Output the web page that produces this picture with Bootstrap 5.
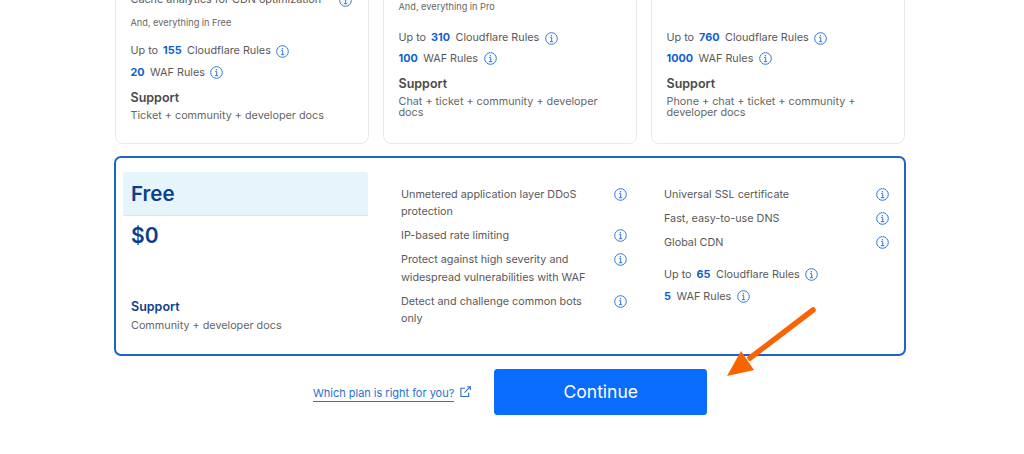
<!DOCTYPE html>
<html lang="en">
<head>
<meta charset="utf-8">
<title>Plans</title>
<link href="https://cdn.jsdelivr.net/npm/bootstrap@5.3.0/dist/css/bootstrap.min.css" rel="stylesheet">
<style>
html,body{height:454px;overflow:hidden;background:#fff}
body{font-family:Inter,"Liberation Sans",sans-serif;color:#595959;position:relative}
.plan-wrap{width:792px;margin-left:114px}
.plan-clip{height:144px;overflow:hidden}
.plan-top{display:grid;grid-template-columns:repeat(3,254px);column-gap:14px;margin-top:-56px;padding-left:1px}
.plan-tile{height:200px;border:1px solid #e9e9e9;border-radius:8px;background:#fff;padding:0 14.5px;position:relative}
.t-line{font-size:10.8px;line-height:16px;white-space:nowrap;display:flex;align-items:center}
.t-cache{margin-top:47px;width:221px}
.t-small{font-size:9.2px;line-height:14px;color:#666}
.t-free{margin-top:8px}
.t-pro{margin-top:55px}
.t-spacer{height:85px}
.t-rule{font-size:10.8px;line-height:16px;display:flex;align-items:center;white-space:nowrap}
.t-rule b{color:#0e5fd0;font-weight:700;margin:0 5.5px 0 5px}
.t-rule b:first-child{margin-left:0}
.r-first{margin-top:13px}
.r-next{margin-top:5.5px}
.t-pro + .r-first{margin-top:16px}
.t-pro ~ .r-next,.t-spacer ~ .r-next{margin-top:4.5px}
.t-head{font-size:12.5px;font-weight:600;line-height:16px;color:#4a4a4a;margin-top:9px}
.t-sub{margin-top:2px;color:#666}
.t-text{font-size:10.8px;line-height:11px;color:#666;margin-top:4.5px;padding-right:10px}
.ii{width:13px;height:13px;flex:none;color:#2f78d8;display:block}
.t-rule .ii{margin-left:5.5px}
.free-box{height:200px;margin-top:12px;border:2px solid #1e64c8;border-radius:7px;display:grid;grid-template-columns:245px 246px 1fr;padding:14px 16px 0 7px;width:792px}
.free-title{height:44px;background:#e6f4fb;border-bottom:1px solid #d8e8f2;border-radius:3px 3px 0 0;font-size:20.5px;font-weight:600;color:#0b3f8a;padding:5px 8px 0;line-height:34px}
.free-price{font-size:21px;font-weight:600;color:#0b3f8a;line-height:30px;padding:5px 8px 0}
.free-sup{font-size:12.5px;font-weight:600;color:#12408c;line-height:16px;margin-top:48px;padding-left:8px}
.free-doc{font-size:10.8px;line-height:16px;color:#666;padding-left:8px;margin-top:3px}
.feat-a{padding:13.5px 0 0 33px}
.feat-b{padding:14px 0 0 50px}
.feat-row{display:flex;justify-content:space-between;font-size:10.8px;line-height:17.5px;color:#595959;margin-bottom:6.5px}
.feat-row .ii{margin-top:2px}
.feat-a .feat-row{width:226px}
.feat-b .feat-row{width:225px}
.feat-b .t-rule.r-first{margin-top:15px}
.feat-b .t-rule.r-next{margin-top:6px}
.act-row{display:flex;align-items:flex-start;margin-top:13px}
.plan-link{font-size:11px;color:#2b6fd0;text-decoration:none;border-bottom:1px solid #2b6fd0;line-height:15px;margin:17px 0 0 199px;white-space:nowrap;letter-spacing:-.02px}
.ext{width:11px;height:11px;color:#2b6fd0;margin:17px 0 0 5.5px;flex:none}
.go-btn{--bs-btn-bg:#0a6cff;--bs-btn-border-color:#0a6cff;--bs-btn-color:#fff;--bs-btn-hover-bg:#0a6cff;--bs-btn-border-radius:3px;width:213px;height:46px;margin-left:23.5px;font-size:17.5px;font-weight:400;padding:0}
.arrow-mark{position:absolute;left:720px;top:300px;width:105px;height:85px;pointer-events:none}
</style>
</head>
<body>
<svg width="0" height="0" class="position-absolute"><defs>
<symbol id="inf" viewBox="0 0 13 13"><circle cx="6.5" cy="6.5" r="5.8" fill="none" stroke="currentColor" stroke-width="1"/><path d="M5.2 5.6h1.5v4M4.9 9.7h3.3" fill="none" stroke="currentColor" stroke-width="1"/><circle cx="6.4" cy="3.7" r=".8" fill="currentColor"/></symbol>
</defs></svg>
<main class="plan-wrap">
  <div class="plan-clip">
  <section class="plan-top">
    <article class="plan-tile">
      <div class="d-flex justify-content-between t-line t-cache"><span>Cache analytics for CDN optimization</span><svg class="ii"><use href="#inf"/></svg></div>
      <div class="t-small t-free">And, everything in Free</div>
      <div class="t-rule r-first"><span>Up to</span><b>155</b><span>Cloudflare Rules</span><svg class="ii"><use href="#inf"/></svg></div>
      <div class="t-rule r-next"><b>20</b><span>WAF Rules</span><svg class="ii"><use href="#inf"/></svg></div>
      <div class="t-head">Support</div>
      <div class="t-line t-sub">Ticket + community + developer docs</div>
    </article>
    <article class="plan-tile">
      <div class="t-small t-pro">And, everything in Pro</div>
      <div class="t-rule r-first"><span>Up to</span><b>310</b><span>Cloudflare Rules</span><svg class="ii"><use href="#inf"/></svg></div>
      <div class="t-rule r-next"><b>100</b><span>WAF Rules</span><svg class="ii"><use href="#inf"/></svg></div>
      <div class="t-head">Support</div>
      <div class="t-text">Chat + ticket + community + developer docs</div>
    </article>
    <article class="plan-tile">
      <div class="t-spacer"></div>
      <div class="t-rule"><span>Up to</span><b>760</b><span>Cloudflare Rules</span><svg class="ii"><use href="#inf"/></svg></div>
      <div class="t-rule r-next"><b>1000</b><span>WAF Rules</span><svg class="ii"><use href="#inf"/></svg></div>
      <div class="t-head">Support</div>
      <div class="t-text">Phone + chat + ticket + community + developer docs</div>
    </article>
  </section>
  </div>
  <section class="free-box">
    <div>
      <div class="free-title">Free</div>
      <div class="free-price">$0</div>
      <div class="free-sup">Support</div>
      <div class="free-doc">Community + developer docs</div>
    </div>
    <div class="feat-a">
      <div class="feat-row"><span>Unmetered application layer DDoS<br>protection</span><svg class="ii"><use href="#inf"/></svg></div>
      <div class="feat-row"><span>IP-based rate limiting</span><svg class="ii"><use href="#inf"/></svg></div>
      <div class="feat-row"><span>Protect against high severity and<br>widespread vulnerabilities with WAF</span><svg class="ii"><use href="#inf"/></svg></div>
      <div class="feat-row"><span>Detect and challenge common bots<br>only</span><svg class="ii"><use href="#inf"/></svg></div>
    </div>
    <div class="feat-b">
      <div class="feat-row"><span>Universal SSL certificate</span><svg class="ii"><use href="#inf"/></svg></div>
      <div class="feat-row"><span>Fast, easy-to-use DNS</span><svg class="ii"><use href="#inf"/></svg></div>
      <div class="feat-row"><span>Global CDN</span><svg class="ii"><use href="#inf"/></svg></div>
      <div class="t-rule r-first"><span>Up to</span><b>65</b><span>Cloudflare Rules</span><svg class="ii"><use href="#inf"/></svg></div>
      <div class="t-rule r-next"><b>5</b><span>WAF Rules</span><svg class="ii"><use href="#inf"/></svg></div>
    </div>
  </section>
  <div class="act-row">
    <a class="plan-link" href="#">Which plan is right for you?</a>
    <svg class="ext" viewBox="0 0 12 12" fill="none" stroke="currentColor" stroke-width="1.2"><path d="M5.5 2.5H1v9h8.5V7"/><path d="M5 7.2 11 1M7.8 .8H11.3V4.3"/></svg>
    <button type="button" class="btn go-btn">Continue</button>
  </div>
</main>
<svg class="arrow-mark" viewBox="0 0 105 85"><path d="M93 10 30 58" stroke="#fa6400" stroke-width="5.5" stroke-linecap="round"/><path d="M7 76 21 51 34 70Z" fill="#fa6400"/></svg>
<script src="https://cdn.jsdelivr.net/npm/bootstrap@5.3.0/dist/js/bootstrap.bundle.min.js"></script>
</body>
</html>
